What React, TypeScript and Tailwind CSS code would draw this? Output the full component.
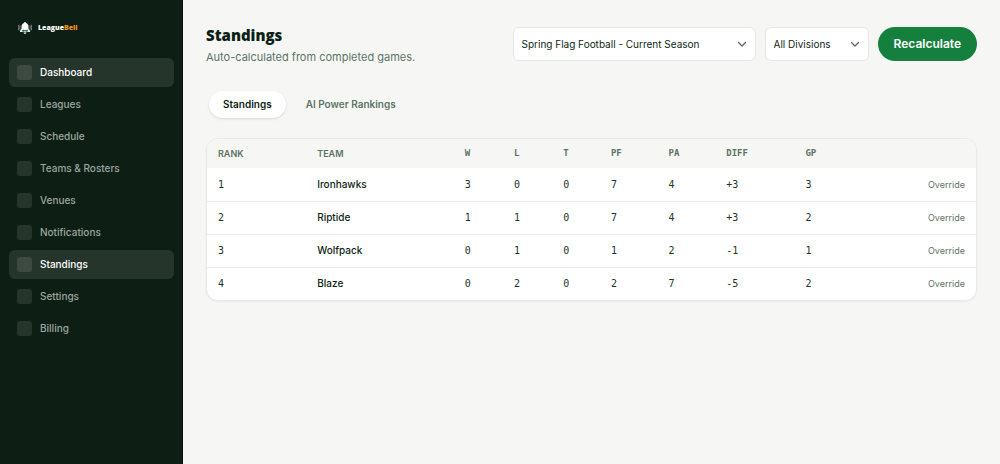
import { useState } from "react";

const navItems = [
  "Dashboard",
  "Leagues",
  "Schedule",
  "Teams & Rosters",
  "Venues",
  "Notifications",
  "Standings",
  "Settings",
  "Billing",
];

const highlighted = ["Dashboard", "Standings"];

const rows = [
  { rank: 1, team: "Ironhawks", stats: ["3", "0", "0", "7", "4", "+3", "3"] },
  { rank: 2, team: "Riptide", stats: ["1", "1", "0", "7", "4", "+3", "2"] },
  { rank: 3, team: "Wolfpack", stats: ["0", "1", "0", "1", "2", "-1", "1"] },
  { rank: 4, team: "Blaze", stats: ["0", "2", "0", "2", "7", "-5", "2"] },
];

const statColumns = [
  { label: "W", width: "w-[6.4%]" },
  { label: "L", width: "w-[6.4%]" },
  { label: "T", width: "w-[6.2%]" },
  { label: "PF", width: "w-[7.5%]" },
  { label: "PA", width: "w-[7.5%]" },
  { label: "DIFF", width: "w-[10.3%]" },
  { label: "GP", width: "w-[9%]" },
];

function BellMark() {
  return (
    <svg viewBox="0 0 28 24" className="h-3 w-3.5" fill="none" aria-hidden="true">
      <path d="M14 0c1.300 0 1.800.9 1.800 2.200 3.800 1 5.200 4 5.200 7.300V14l3 3.700v2.300H4v-2.300L7 14V9.500c0-3.300 1.400-6.300 5.200-7.300C12.200.9 12.700 0 14 0z" fill="#fff" />
      <path d="M7.500 18c1.500-3 4-3 6.500-1.500 2.500-1.500 5-1.500 6.500 1.500l-2.500 1.500h-2L14 18l-2 1.500h-2z" fill="#26724b" />
      <path d="M11 21h6c-.4 1.800-1.500 2.500-3 2.500s-2.600-.7-3-2.500z" fill="#fff" />
      <path d="M4.500 7c-1.300 2.500-1.300 6 0 8.500M1.800 5.500c-1.700 3.500-1.700 8 0 11.500M23.500 7c1.300 2.500 1.300 6 0 8.500M26.200 5.500c1.700 3.500 1.700 8 0 11.500" stroke="#a5afa9" strokeWidth="1.500" />
    </svg>
  );
}

function Chevron() {
  return (
    <svg viewBox="0 0 10 10" className="pointer-events-none absolute top-1/2 right-[9px] size-2.5 -translate-y-1/2" fill="none" aria-hidden="true">
      <path d="M1.500 3.500 5 7l3.500-3.500" stroke="#5d6672" strokeWidth="1.300" strokeLinecap="round" strokeLinejoin="round" />
    </svg>
  );
}

export default function App() {
  const [tab, setTab] = useState("Standings");

  return (
    <div className="flex min-h-screen bg-[#f6f7f5] font-['Inter',sans-serif] text-[#0d1f15]">
      <aside className="w-[183px] shrink-0 border-r border-[#07130c] bg-[#0d1f15] pt-5 pr-2 pl-[9px]">
        <a href="#" className="ml-[9px] flex h-4 items-center gap-1.5 font-['Open_Sans',sans-serif] text-[7px] font-extrabold text-white">
          <BellMark />
          <span>
            League<span className="text-[#f28c18]">Bell</span>
          </span>
        </a>
        <nav className="mt-[22px] flex flex-col gap-[3px]">
          {navItems.map((item) => {
            const on = highlighted.includes(item);
            return (
              <a
                key={item}
                href="#"
                className={`flex h-[29px] items-center gap-2 rounded-md px-2 text-[10px] font-medium ${
                  on ? "bg-[#26352c] text-white" : "text-[#9da69f]"
                }`}
              >
                <span className={`size-[15px] rounded-[3px] ${on ? "bg-[#3c4a42]" : "bg-[#25352c]"}`} />
                {item}
              </a>
            );
          })}
        </nav>
      </aside>

      <main className="min-w-0 flex-1 px-[23px] pt-[27px]">
        <header className="flex items-start justify-between gap-4">
          <div>
            <h1 className="font-['Open_Sans',sans-serif] text-[15px] leading-4 font-extrabold">Standings</h1>
            <p className="mt-1.5 text-[11px] leading-4 text-[#5c7365]">Auto-calculated from completed games.</p>
          </div>
          <div className="flex gap-[9px]">
            <div className="relative">
              <select aria-label="Season" className="h-[34px] w-[243px] appearance-none rounded-md border border-[#e3e9e5] bg-white px-2 text-[10px] text-[#0d1f15]">
                <option>Spring Flag Football - Current Season</option>
              </select>
              <Chevron />
            </div>
            <div className="relative">
              <select aria-label="Division" className="h-[34px] w-[104px] appearance-none rounded-md border border-[#e3e9e5] bg-white px-2 text-[10px] text-[#0d1f15]">
                <option>All Divisions</option>
              </select>
              <Chevron />
            </div>
            <button type="button" className="h-[34px] rounded-full bg-[#15803d] px-4 text-xs font-semibold text-white">
              Recalculate
            </button>
          </div>
        </header>

        <div role="tablist" className="mt-[26px] flex gap-1.5 px-[3px]">
          {["Standings", "AI Power Rankings"].map((name) => (
            <button
              key={name}
              type="button"
              role="tab"
              aria-selected={tab === name}
              onClick={() => setTab(name)}
              className={`h-[27px] rounded-full px-3.5 text-[10px] font-semibold ${
                tab === name ? "bg-white text-[#0d1f15] shadow-sm" : "text-[#5c7365]"
              }`}
            >
              {name}
            </button>
          ))}
        </div>

        <div className="mt-5 overflow-hidden rounded-xl border border-[#e6ebe8] bg-white shadow-xs">
          <table className="w-full table-fixed text-left text-[10px]">
            <thead className="bg-[#f6f7f5] text-[9px] text-[#5c7365]">
              <tr className="h-[29px]">
                <th className="w-[12.9%] px-[11px] font-semibold">RANK</th>
                <th className="w-[19.2%] px-[11px] font-semibold">TEAM</th>
                {statColumns.map((column) => (
                  <th key={column.label} className={`${column.width} px-[11px] font-['DejaVu_Sans_Mono',monospace] font-bold`}>
                    {column.label}
                  </th>
                ))}
                <th aria-label="Actions" />
              </tr>
            </thead>
            <tbody className="divide-y divide-[#e8edea]">
              {rows.map((row) => (
                <tr key={row.team} className="h-[33px]">
                  <td className="px-[11px] font-['DejaVu_Sans_Mono',monospace] text-[#1d3327]">{row.rank}</td>
                  <td className="px-[11px] font-medium">{row.team}</td>
                  {row.stats.map((value, index) => (
                    <td key={index} className="px-[11px] font-['DejaVu_Sans_Mono',monospace] text-[#1d3327]">
                      {value}
                    </td>
                  ))}
                  <td className="px-[11px] text-right">
                    <button type="button" className="text-[9px] text-[#5c7365]">
                      Override
                    </button>
                  </td>
                </tr>
              ))}
            </tbody>
          </table>
        </div>
      </main>
    </div>
  );
}
